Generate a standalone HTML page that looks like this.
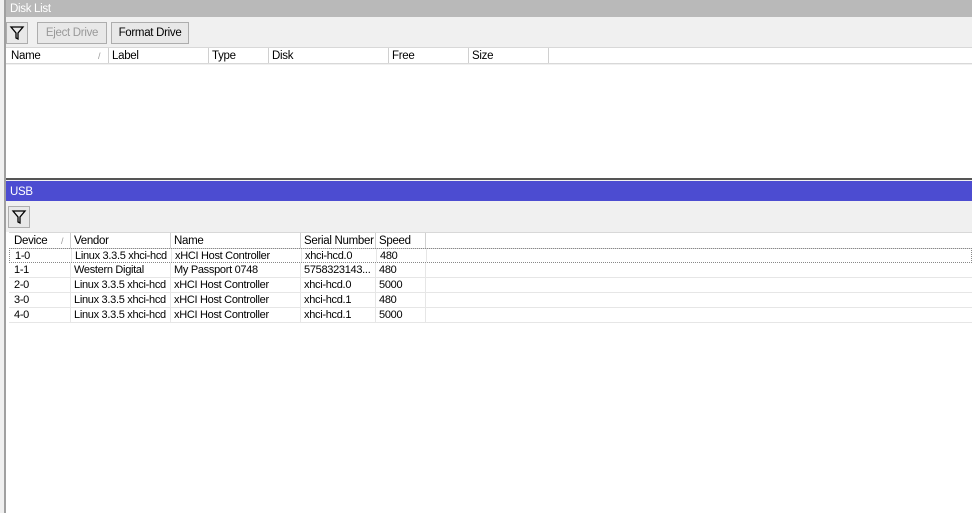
<!DOCTYPE html>
<html><head><style>
*{margin:0;padding:0;box-sizing:border-box}
body{width:972px;height:513px;overflow:hidden;background:#f0f0f0;font-family:"Liberation Sans",Arial,sans-serif;font-size:11px;color:#000;position:relative;letter-spacing:-0.3px}
.abs{position:absolute}
.vline{left:4px;top:0;width:2px;height:513px;background:#a0a0a0}
.title{color:#fff;font-size:11.5px;padding-left:4px;line-height:18px}
.btn{position:absolute;height:22px;border:1px solid #adadad;background:#e8e8e8;line-height:20px;text-align:center;font-size:11.5px}
.hdr{position:absolute;height:17px;background:#fff;border-bottom:1px solid #d8d8d8}
.hdr div,.row div{position:absolute;top:0;height:100%;border-right:1px solid #d0d0d0;padding-left:3px;white-space:nowrap;overflow:hidden}
.hdr div{line-height:17px;font-size:11.5px}
.row{position:absolute;height:15px;left:9px;width:963px;border-bottom:1px solid #e6e6e6}
.row div{line-height:15px;font-size:11px;border-right:1px solid #e6e6e6}
.filt{position:absolute;width:22px;height:22px;border:1px solid #adadad;background:#e8e8e8}
</style></head><body>
<div class="abs vline"></div>
<div class="abs title" style="left:6px;top:0;width:966px;height:17px;background:#b9b9b9">Disk List</div>
<div class="filt" style="left:6px;top:22px"><svg width="20" height="20" viewBox="0 0 20 20"><path d="M4 4h12l-5 6v6l-2-1v-5z" fill="none" stroke="#000" stroke-width="1.3"/></svg></div>
<div class="btn" style="left:37px;top:22px;width:70px;color:#999">Eject Drive</div>
<div class="btn" style="left:111px;top:22px;width:78px">Format Drive</div>
<div class="hdr" style="left:6px;top:47px;width:966px;border-top:1px solid #d8d8d8">
<div style="left:2px;width:101px">Name<span style="position:absolute;left:90px;color:#999;font-size:9px">/</span></div>
<div style="left:103px;width:100px">Label</div>
<div style="left:203px;width:60px">Type</div>
<div style="left:263px;width:120px">Disk</div>
<div style="left:383px;width:80px">Free</div>
<div style="left:463px;width:80px">Size</div>
</div>
<div class="abs" style="left:6px;top:65px;width:966px;height:113px;background:#fff"></div>
<div class="abs" style="left:6px;top:178px;width:966px;height:2px;background:#555"></div>
<div class="abs title" style="left:6px;top:181px;width:966px;height:20px;line-height:22px;background:#4c4cd1">USB</div>
<div class="filt" style="left:8px;top:206px"><svg width="20" height="20" viewBox="0 0 20 20"><path d="M4 4h12l-5 6v6l-2-1v-5z" fill="none" stroke="#000" stroke-width="1.3"/></svg></div>
<div class="abs" style="left:6px;top:232px;width:966px;height:281px;background:#fff"></div>
<div class="hdr" style="left:9px;top:232px;width:963px;border-top:1px solid #d8d8d8">
<div style="left:2px;width:60px">Device<span style="position:absolute;left:50px;color:#999;font-size:9px">/</span></div>
<div style="left:62px;width:100px">Vendor</div>
<div style="left:162px;width:130px">Name</div>
<div style="left:292px;width:75px">Serial Number</div>
<div style="left:367px;width:50px">Speed</div>
</div>
<div class="row" style="top:248px;border:1px dotted #888"><div style="left:2px;width:60px">1-0</div><div style="left:62px;width:100px">Linux 3.3.5 xhci-hcd</div><div style="left:162px;width:130px">xHCI Host Controller</div><div style="left:292px;width:75px">xhci-hcd.0</div><div style="left:367px;width:50px">480</div></div>
<div class="row" style="top:263px"><div style="left:2px;width:60px">1-1</div><div style="left:62px;width:100px">Western Digital</div><div style="left:162px;width:130px">My Passport 0748</div><div style="left:292px;width:75px">5758323143...</div><div style="left:367px;width:50px">480</div></div>
<div class="row" style="top:278px"><div style="left:2px;width:60px">2-0</div><div style="left:62px;width:100px">Linux 3.3.5 xhci-hcd</div><div style="left:162px;width:130px">xHCI Host Controller</div><div style="left:292px;width:75px">xhci-hcd.0</div><div style="left:367px;width:50px">5000</div></div>
<div class="row" style="top:293px"><div style="left:2px;width:60px">3-0</div><div style="left:62px;width:100px">Linux 3.3.5 xhci-hcd</div><div style="left:162px;width:130px">xHCI Host Controller</div><div style="left:292px;width:75px">xhci-hcd.1</div><div style="left:367px;width:50px">480</div></div>
<div class="row" style="top:308px"><div style="left:2px;width:60px">4-0</div><div style="left:62px;width:100px">Linux 3.3.5 xhci-hcd</div><div style="left:162px;width:130px">xHCI Host Controller</div><div style="left:292px;width:75px">xhci-hcd.1</div><div style="left:367px;width:50px">5000</div></div>
</body></html>
